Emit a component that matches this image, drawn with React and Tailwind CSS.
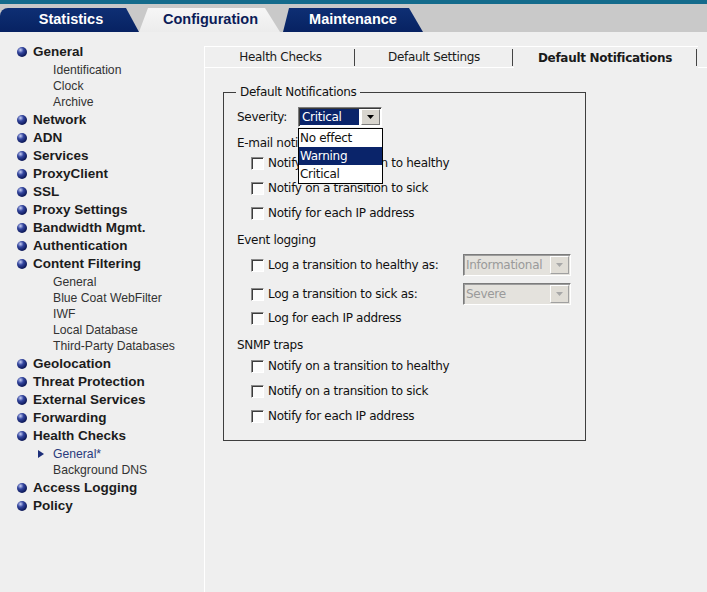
import React from 'react';

const navItems = [
  { label: 'General', subs: ['Identification', 'Clock', 'Archive'] },
  { label: 'Network' },
  { label: 'ADN' },
  { label: 'Services' },
  { label: 'ProxyClient' },
  { label: 'SSL' },
  { label: 'Proxy Settings' },
  { label: 'Bandwidth Mgmt.' },
  { label: 'Authentication' },
  {
    label: 'Content Filtering',
    subs: ['General', 'Blue Coat WebFilter', 'IWF', 'Local Database', 'Third-Party Databases'],
  },
  { label: 'Geolocation' },
  { label: 'Threat Protection' },
  { label: 'External Services' },
  { label: 'Forwarding' },
  { label: 'Health Checks', subs: ['General*', 'Background DNS'], active: 'General*' },
  { label: 'Access Logging' },
  { label: 'Policy' },
];

const Bullet = () => (
  <span className="w-[10px] h-[10px] rounded-full shrink-0 bg-[radial-gradient(circle_at_35%_30%,#c9d0f5_0%,#34469f_32%,#0e1a5c_70%,#040828_100%)]" />
);

const Checkbox = () => (
  <span className="w-[13px] h-[13px] shrink-0 bg-[#fbfbfb] border border-t-[#8a8a8a] border-l-[#8a8a8a] border-r-white border-b-white shadow-[inset_1px_1px_0_#3c3c3c]" />
);

const Arrow = ({ color = '#000' }) => (
  <svg width="7" height="4" viewBox="0 0 7 4">
    <path d="M0 0h7L3.5 4z" fill={color} />
  </svg>
);

const CheckRow = ({ label, mt, children }) => (
  <div className={`flex items-center h-[20px] pl-[14px] ${mt}`}>
    <Checkbox />
    <span className="ml-[4px] w-[190px]">{label}</span>
    {children}
  </div>
);

const DisabledSelect = ({ value }) => (
  <div className="ml-[5px] w-[108px] h-[22px] flex items-stretch bg-[#e4e2dd] border border-t-[#7c7c7c] border-l-[#7c7c7c] border-r-white border-b-white shadow-[inset_1px_1px_0_#9c9c9c]">
    <span className="flex-1 flex items-center pl-[2px] text-[#9a9a9a]">{value}</span>
    <span className="w-[19px] my-[1px] mr-[1px] flex items-center justify-center bg-[#e0ddd6] border border-t-white border-l-white border-r-[#a0a0a0] border-b-[#a0a0a0]">
      <Arrow color="#a8a8a8" />
    </span>
  </div>
);

export default function App() {
  return (
    <div className="w-[707px] h-[592px] bg-[#efefef] overflow-hidden flex flex-col font-['Liberation_Sans',Arial,sans-serif]">
      {/* top tabs */}
      <div className="h-[32px] shrink-0 bg-[#c9c9c9] border-t-[4px] border-[#146b8c] flex items-end text-[14.5px] font-bold">
        <div className="w-[139px] h-[24px] flex items-center justify-center pl-[3px] text-white rounded-tl-[8px] bg-[linear-gradient(#0e2f74,#072262)] [clip-path:polygon(0_0,126px_0,139px_100%,0_100%)]">
          Statistics
        </div>
        <div className="w-[141px] h-[24px] flex items-center justify-center pl-[2px] text-[#0b1c58] bg-[linear-gradient(#f6f6f6,#ececec)] [clip-path:polygon(0_100%,9px_0,126px_0,141px_100%)]">
          Configuration
        </div>
        <div className="ml-[3px] w-[140px] h-[24px] flex items-center justify-center text-white bg-[linear-gradient(#0e2f74,#072262)] [clip-path:polygon(0_100%,6px_0,126px_0,140px_100%)]">
          Maintenance
        </div>
      </div>

      <div className="flex flex-1 min-h-0">
        {/* sidebar */}
        <nav className="w-[204px] shrink-0 pt-[11px]">
          {navItems.map((item) => (
            <div key={item.label}>
              <div className="h-[18px] flex items-center pl-[17px] gap-[6px] text-[13.5px] font-bold text-[#1c1c1c]">
                <Bullet />
                <span>{item.label}</span>
              </div>
              {item.subs && (
                <div className="pt-[1px] pb-[1px]">
                  {item.subs.map((s) => (
                    <div
                      key={s}
                      className={`h-[16px] flex items-center pl-[53px] text-[12.2px] relative ${
                        s === item.active ? 'text-[#2a3a7c]' : 'text-[#333]'
                      }`}
                    >
                      {s === item.active && (
                        <svg className="absolute left-[38px]" width="6" height="8" viewBox="0 0 6 8">
                          <path d="M0 0l6 4-6 4z" fill="#1d2f7a" />
                        </svg>
                      )}
                      {s}
                    </div>
                  ))}
                </div>
              )}
            </div>
          ))}
        </nav>

        {/* main */}
        <main className="flex-1 flex flex-col pt-[14px] font-['DejaVu_Sans',sans-serif] text-[12px] tracking-[-0.3px] text-[#111]">
          <div className="flex h-[22px] text-[#1a1a1a]">
            <div className="w-[152px] flex items-center border-t border-b border-l border-white">
              <span className="flex-1 text-center pl-[2px]">Health Checks</span>
              <span className="w-[2px] h-[17px] border-l border-[#444]" />
            </div>
            <div className="w-[158px] flex items-center border-t border-b border-white">
              <span className="flex-1 text-center">Default Settings</span>
              <span className="w-[2px] h-[17px] border-l border-[#444]" />
            </div>
            <div className="w-[184px] flex items-center border-t border-white font-bold">
              <span className="flex-1 text-center">Default Notifications</span>
              <span className="w-[2px] h-[17px] border-l border-[#444]" />
            </div>
            <div className="flex-1 border-b border-white" />
          </div>

          <div className="flex-1 border-l border-white pl-[18px] pt-[16px]">
            <fieldset className="w-[363px] h-[357px] border border-[#3e3e3e] pl-[13px] pt-[7px]">
              <legend className="ml-[-1px] px-[4px] leading-[16px]">Default Notifications</legend>

              <div className="flex items-center h-[20px]">
                <span className="w-[61px]">Severity:</span>
                <div className="relative">
                  <div className="w-[84px] h-[20px] flex items-stretch bg-white border border-t-[#7c7c7c] border-l-[#7c7c7c] border-r-white border-b-white shadow-[inset_1px_1px_0_#3a3a3a]">
                    <span className="flex-1 flex items-center pl-[2px] ml-[1px] mt-[1px] mb-[1px] bg-[#0a246a] text-white">
                      Critical
                    </span>
                    <span className="w-[19px] ml-[2px] my-[1px] mr-[1px] flex items-center justify-center bg-[#d8d5ce] border border-t-white border-l-white border-r-[#7a7a7a] border-b-[#7a7a7a]">
                      <Arrow />
                    </span>
                  </div>
                  <div className="absolute left-0 top-[21px] w-[85px] bg-white border border-black z-10">
                    <div className="h-[18px] flex items-center pl-[1px]">No effect</div>
                    <div className="h-[18px] flex items-center pl-[1px] bg-[#0a246a] text-white">Warning</div>
                    <div className="h-[18px] flex items-center pl-[1px]">Critical</div>
                  </div>
                </div>
              </div>

              <div className="h-[20px] flex items-center mt-[6px]">E-mail notifications</div>
              <CheckRow label="Notify on a transition to healthy" mt="mt-0" />
              <CheckRow label="Notify on a transition to sick" mt="mt-[5px]" />
              <CheckRow label="Notify for each IP address" mt="mt-[5px]" />

              <div className="h-[20px] flex items-center mt-[7px]">Event logging</div>
              <CheckRow label="Log a transition to healthy as:" mt="mt-[5px]">
                <DisabledSelect value="Informational" />
              </CheckRow>
              <CheckRow label="Log a transition to sick as:" mt="mt-[9px]">
                <DisabledSelect value="Severe" />
              </CheckRow>
              <CheckRow label="Log for each IP address" mt="mt-[4px]" />

              <div className="h-[20px] flex items-center mt-[7px]">SNMP traps</div>
              <CheckRow label="Notify on a transition to healthy" mt="mt-[1px]" />
              <CheckRow label="Notify on a transition to sick" mt="mt-[5px]" />
              <CheckRow label="Notify for each IP address" mt="mt-[5px]" />
            </fieldset>
          </div>
        </main>
      </div>
    </div>
  );
}
